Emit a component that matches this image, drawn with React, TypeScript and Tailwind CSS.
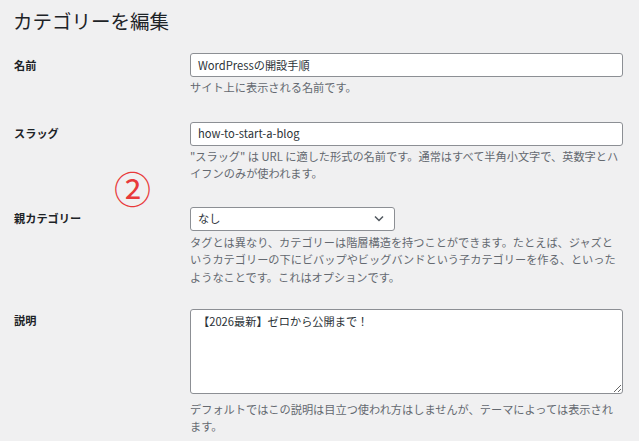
import React from "react";

const font = "font-['Noto_Sans_CJK_JP','Noto_Sans',sans-serif]";

function Row({
  label,
  children,
  className = "",
}: {
  label: string;
  children: React.ReactNode;
  className?: string;
}) {
  return (
    <div className={`flex ${className}`}>
      <div className="w-[190px] shrink-0 pl-[14px]">
        <div className="h-[24px] flex items-center text-[11.2px] font-bold text-[#1d2327]">
          {label}
        </div>
      </div>
      <div className="w-[433px]">{children}</div>
    </div>
  );
}

function Desc({ children, className = "" }: { children: React.ReactNode; className?: string }) {
  return (
    <p className={`text-[11.2px] leading-[17.6px] text-[#646970] ${className}`}>{children}</p>
  );
}

export default function App() {
  return (
    <div className={`relative w-[639px] min-h-[441px] overflow-hidden bg-[#f0f0f1] ${font}`}>
      <h1 className="pl-[13px] pt-[8px] text-[19.5px] leading-[26px] font-normal text-[#1d2327]">
        カテゴリーを編集
      </h1>

      <Row label="名前" className="mt-[19px]">
        <div className="h-[24px] w-full rounded-[3px] border border-[#8c8f94] bg-white px-[7px] flex items-center text-[11.2px] text-[#2c3338]">
          WordPressの開設手順
        </div>
        <Desc className="mt-[2px]">サイト上に表示される名前です。</Desc>
      </Row>

      <Row label="スラッグ" className="mt-[25px]">
        <div className="h-[24px] w-full rounded-[3px] border border-[#8c8f94] bg-white px-[7px] flex items-center text-[11.2px] text-[#2c3338]">
          how-to-start-a-blog
        </div>
        <Desc className="mt-[2px]">
          "スラッグ" は URL に適した形式の名前です。通常はすべて半角小文字で、英数字とハ
          <br />
          イフンのみが使われます。
        </Desc>
      </Row>

      <Row label="親カテゴリー" className="mt-[24px]">
        <div className="h-[24px] w-[205px] rounded-[3px] border border-[#8c8f94] bg-white pl-[7px] pr-[8px] flex items-center justify-between text-[11.2px] text-[#2c3338]">
          <span>なし</span>
          <svg width="10" height="7" viewBox="0 0 10 7" className="mr-[2px]">
            <polyline points="1,1.5 5,5.5 9,1.5" fill="none" stroke="#50575e" strokeWidth="1.5" />
          </svg>
        </div>
        <Desc className="mt-[3px]">
          タグとは異なり、カテゴリーは階層構造を持つことができます。たとえば、ジャズと
          <br />
          いうカテゴリーの下にビバップやビッグバンドという子カテゴリーを作る、といった
          <br />
          ようなことです。これはオプションです。
        </Desc>
      </Row>

      <Row label="説明" className="mt-[22px]">
        <textarea
          readOnly
          value="【2026最新】ゼロから公開まで！"
          className="block h-[85px] w-full resize-y rounded-[3px] border border-[#8c8f94] bg-white px-[7px] py-[3px] text-[11.2px] leading-[17px] text-[#2c3338] outline-none"
        />
        <Desc className="mt-[7px]">
          デフォルトではこの説明は目立つ使われ方はしませんが、テーマによっては表示され
          <br />
          ます。
        </Desc>
      </Row>

      <div className="absolute left-[114px] top-[166px] text-[37px] leading-[44px] text-[#e8393a] font-['Noto_Sans_CJK_JP',sans-serif]">
        ②
      </div>
    </div>
  );
}
